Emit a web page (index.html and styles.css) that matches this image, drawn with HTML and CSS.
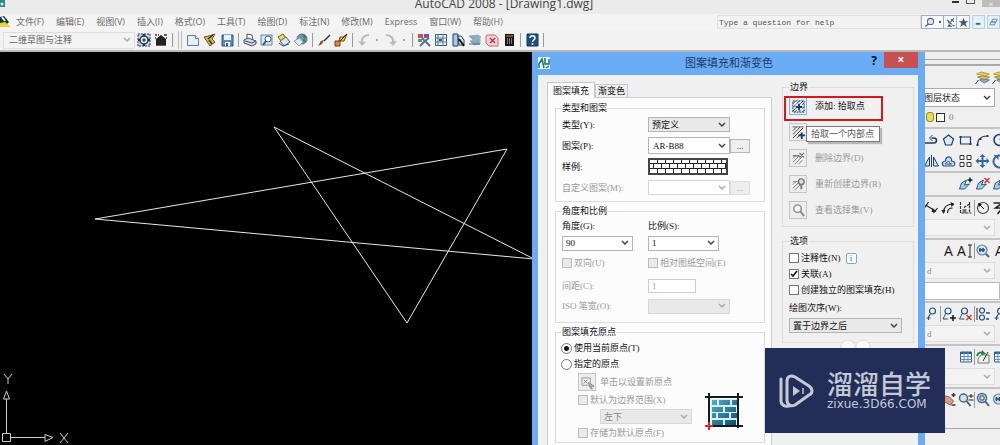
FILE: index.html
```html
<!DOCTYPE html>
<html lang="zh-CN">
<head>
<meta charset="utf-8">
<title>AutoCAD 2008 - [Drawing1.dwg]</title>
<link rel="stylesheet" href="styles.css">
</head>
<body>
<svg class="symbols" aria-hidden="true">
  <symbol id="gear" viewBox="0 0 16 16"><path d="M2 2h12v12H2z" fill="#c9d3dd" stroke="#29394a" stroke-dasharray="2 1"/><circle cx="8" cy="8" r="4" fill="#dfe8f2" stroke="#1f3650" stroke-width="1.5"/><circle cx="8" cy="8" r="1.5" fill="#1f3650"/><path d="M8 2v2M8 12v2M2 8h2M12 8h2" stroke="#1f3650" stroke-width="2"/></symbol>
  <symbol id="home" viewBox="0 0 16 16"><path d="M3 7l5-4 5 4v6H3z" fill="#222"/><path d="M2 3h2M5 3h1M11 3h3M2 6h1M13 6h1M3 13h10" stroke="#333" stroke-width="1.5"/><path d="M3 7h10v6H3z" fill="#222"/></symbol>
  <symbol id="new" viewBox="0 0 16 16"><path d="M2.500 3.500h8l3 3v7h-11z" fill="#e4eff8" stroke="#5c7f9f"/><path d="M10.500 3.500v3h3" fill="#fff" stroke="#5c7f9f"/></symbol>
  <symbol id="open" viewBox="0 0 16 16"><path d="M2 5l5-1 6-2-3 5 3 3-5 4z" fill="#d8b647" stroke="#6b5a1c"/><path d="M6 7l5-4M7 8l3 4" stroke="#333" stroke-width="1.500"/></symbol>
  <symbol id="save" viewBox="0 0 16 16"><path d="M3 3h11v11H3z" fill="#5b8ab8" stroke="#31597f"/><path d="M5 3h7v5H5z" fill="#e8f1fa"/><path d="M6 10h5v4H6z" fill="#fff"/><path d="M7 11h2v3H7z" fill="#31597f"/></symbol>
  <symbol id="print" viewBox="0 0 16 16"><path d="M5 2l5 1 1 6-6-1z" fill="#fff" stroke="#456"/><path d="M2 8l4-2 8 3v3l-4 2-8-3z" fill="#d6dce5" stroke="#43506b"/><path d="M3 9l7 2 4-2" fill="none" stroke="#43506b"/></symbol>
  <symbol id="preview" viewBox="0 0 16 16"><path d="M2 3h11v10H2z" fill="#d9eaf7" stroke="#6086a8"/><circle cx="9" cy="7" r="3" fill="#fff" stroke="#35587b"/><path d="M7 9l-3 4" stroke="#35587b" stroke-width="2"/></symbol>
  <symbol id="publish" viewBox="0 0 16 16"><path d="M2 5l5-3 3 4-5 3z" fill="#efd55b" stroke="#766015"/><path d="M4 9l6-4 4 5-6 4z" fill="#dce6ee" stroke="#476178"/><path d="M3 11l4 3 6-2" fill="none" stroke="#374f66"/></symbol>
  <symbol id="globe" viewBox="0 0 16 16"><circle cx="9" cy="7" r="5" fill="#6f95b5" stroke="#537087"/><path d="M9 2c5 1 5 4 2 5s1 3 2 3" fill="#3f7f55"/><path d="M1 9l6-3 3 4-4 4z" fill="#dfe9ef" stroke="#8b9cab"/></symbol>
  <symbol id="brush" viewBox="0 0 16 16"><path d="M14 3L8 9" stroke="#333" stroke-width="1.500"/><path d="M8 8l-2 4-4 2 3-5z" fill="#7b4a3a"/></symbol>
  <symbol id="match" viewBox="0 0 16 16"><path d="M14 2l-4 3-3 0-1 4 5 0z" fill="#eac34c" stroke="#684910"/><path d="M2 9h5v5H2z" fill="#d98a3a" stroke="#7d3e17"/><path d="M14 2L7 9" stroke="#503015"/></symbol>
  <symbol id="undo" viewBox="0 0 16 16"><path d="M13 3C8 3 5 6 6 12" fill="none" stroke="#b9bdc1" stroke-width="2"/><path d="M2 9l4 5 4-4z" fill="#b9bdc1"/></symbol>
  <symbol id="redo" viewBox="0 0 16 16"><path d="M3 3c5 0 8 3 7 9" fill="none" stroke="#b9bdc1" stroke-width="2"/><path d="M14 9l-4 5-4-4z" fill="#b9bdc1"/></symbol>
  <symbol id="props" viewBox="0 0 16 16"><path d="M2 2h5v4H2z" fill="#d4485c"/><path d="M8 2h5v4H8z" fill="#7252b5"/><path d="M2 7h4v3H2z" fill="#46a35e"/><path d="M6 6l3 3 4-3M9 9l-5 5M9 9l5 5" fill="none" stroke="#5a7389" stroke-width="2"/></symbol>
  <symbol id="center" viewBox="0 0 16 16"><path d="M2.500 2.500h11v11h-11z" fill="#eef4fa" stroke="#31587c"/><path d="M5 2v12M2 6h12M2 10h12M10 2v12" stroke="#4d7799"/><path d="M6 7h3v2H6z" fill="#31587c"/></symbol>
  <symbol id="palettes" viewBox="0 0 16 16"><path d="M3 2h5v12H3z" fill="#aacbe6" stroke="#1f405d"/><path d="M8 4h3l3 4v5H9z" fill="#e6eff6" stroke="#1f405d"/><path d="M9 7l5 7" stroke="#111" stroke-width="2"/></symbol>
  <symbol id="sheets" viewBox="0 0 16 16"><path d="M2 4l9-1 3 2-8 3zM3 9l10-3v6l-6 1z" fill="#8ba9b9" stroke="#9ab1bd"/><path d="M2 12h11" stroke="#4a6d80"/></symbol>
  <symbol id="markup" viewBox="0 0 16 16"><path d="M3 3h8l3 3v8H5L2 11V4z" fill="#f1d3d6" stroke="#c66a74"/><path d="M6 6l5 5M11 6l-5 5" stroke="#bd3b46" stroke-width="1.500"/></symbol>
  <symbol id="calc" viewBox="0 0 16 16"><path d="M4 2h9v12H4z" fill="#171717"/><path d="M5 3h7v2H5z" fill="#a53b2b"/><path d="M6 7h6M6 9h6M6 11h6" stroke="#ddd" stroke-dasharray="1 1"/></symbol>
  <symbol id="help" viewBox="0 0 16 16"><path d="M3 2h11v12H3z" fill="#1d4f80" stroke="#123b63"/><path d="M6 6c0-3 5-3 5 0 0 2-2.500 2-2.500 4M8.500 11v2" fill="none" stroke="#fff" stroke-width="1.500"/></symbol>
  <symbol id="lens" viewBox="0 0 16 16"><path d="M7 9l-5 5" stroke="#555c68" stroke-width="2"/><circle cx="9.500" cy="6.500" r="4.500" fill="#dfe5f3" stroke="#5a6480" stroke-width="1.500"/></symbol>
  <symbol id="dish" viewBox="0 0 16 16"><path d="M3 3c0 5 3 8 8 8zM6 10l-3 4h8z" fill="#4a607c"/><path d="M9 3l4 4M8 7l5-5M11 12l3 1" stroke="#4a607c" stroke-width="1.500"/></symbol>
  <symbol id="star" viewBox="0 0 16 16"><path d="M8 1l2 5h5l-4 3 2 6-5-4-5 4 2-6-4-3h5z" fill="#46566c"/></symbol>
  <symbol id="layers" viewBox="0 0 16 16"><path d="M2 5l5-2 8 2-5 2z" fill="#e3cb55" stroke="#b9a23a"/><path d="M3 8l5-1 7 1-5 3z" fill="#d2c27a" stroke="#9c8d4a"/><path d="M5 11l4-1 6 1-5 3z" fill="#94aabc" stroke="#6b8092"/><path d="M1 15l3-4" stroke="#333"/></symbol>
  <symbol id="pline" viewBox="0 0 16 16"><path d="M1 11h9c4 0 4-5 0-5H8" fill="none" stroke="#1f3e5c" stroke-width="1.500"/><path d="M9 3L6 6l3 3" fill="none" stroke="#1f3e5c"/></symbol>
  <symbol id="polygon" viewBox="0 0 16 16"><path d="M8 3l5 4-2 6H5L3 7z" fill="#dceaf4" stroke="#1f3e5c" stroke-width="1.200"/></symbol>
  <symbol id="rect" viewBox="0 0 16 16"><path d="M3 5h10v7H3z" fill="#e7f0f7" stroke="#1f3e5c" stroke-width="1.200"/><path d="M2 4h2v2H2zM12 11h2v2h-2z" fill="#1f3e5c"/></symbol>
  <symbol id="arc" viewBox="0 0 16 16"><path d="M3 13c0-6 4-9 10-9" fill="none" stroke="#1f3e5c" stroke-width="1.200"/><path d="M2 12h2v2H2zM12 3h2v2h-2zM5 6h2v2H5z" fill="#1f3e5c"/></symbol>
  <symbol id="circle" viewBox="0 0 16 16"><circle cx="8" cy="8" r="5.500" fill="#e7f0f7" stroke="#1f3e5c" stroke-width="1.500"/><path d="M8 8l3-3" stroke="#1f3e5c"/></symbol>
  <symbol id="mirror" viewBox="0 0 16 16"><path d="M6 4v9H1zM10 4v9h5z" fill="#cfe0ec" stroke="#1f3e5c"/><path d="M8 2v12" stroke="#1f3e5c"/></symbol>
  <symbol id="offset" viewBox="0 0 16 16"><path d="M3 13c-3-3 0-5 2-5 0-6 7-5 6 0 4 0 4 4 2 5z" fill="#c5dced" stroke="#2a5478" stroke-width="1.200"/><path d="M5 11c0-2 2-1 3-3 1 1 0 3 3 3z" fill="#fff" stroke="#2a5478"/></symbol>
  <symbol id="array" viewBox="0 0 16 16"><path d="M2.500 2.500h4v4h-4zM9.500 2.500h4v4h-4zM2.500 9.500h4v4h-4zM9.500 9.500h4v4h-4z" fill="#fff" stroke="#333"/></symbol>
  <symbol id="move" viewBox="0 0 16 16"><path d="M8 3v10M3 8h10" stroke="#326a98" stroke-width="2"/><path d="M8 1l3 3H5zM8 15l3-3H5zM1 8l3-3v6zM15 8l-3-3v6z" fill="#326a98"/></symbol>
  <symbol id="rotate" viewBox="0 0 16 16"><path d="M12 4a6 6 0 1 0 2 5" fill="none" stroke="#326a98" stroke-width="2"/><path d="M2 2h5v5z" fill="#326a98"/></symbol>
  <symbol id="edit-add" viewBox="0 0 16 16"><path d="M2 13l2-6 5-3-2 5 5-1-5 5z" fill="#a9cbe2" stroke="#285b84"/><path d="M10 4h5M12.500 1.500v5" stroke="#123" stroke-width="1.500"/></symbol>
  <symbol id="edit-del" viewBox="0 0 16 16"><path d="M2 13l2-6 5-3-2 5 5-1-5 5z" fill="#a9cbe2" stroke="#285b84"/><path d="M10 2l5 5M15 2l-5 5" stroke="#c83a3a" stroke-width="1.500"/></symbol>
  <symbol id="dim-align" viewBox="0 0 16 16"><path d="M2 5l10 6M10 13l4-5M1 8l4-6" stroke="#222" stroke-width="1.200"/><path d="M9 8l4 4-5 0z" fill="#222"/></symbol>
  <symbol id="dim-arc" viewBox="0 0 16 16"><path d="M3 13c0-6 4-9 10-9M7 13c0-3 2-5 5-5" fill="none" stroke="#222" stroke-width="1.200"/><path d="M1 10h4l-2 4zM10 2l4 2-3 3z" fill="#222"/></symbol>
  <symbol id="dim-ord" viewBox="0 0 16 16"><path d="M3 2v11h11M7 12V7l5-3v8M12 2v3" fill="none" stroke="#333" stroke-width="1.200" stroke-dasharray="3 1"/><path d="M5 9h4v4H5z" fill="#777"/></symbol>
  <symbol id="dim-rad" viewBox="0 0 16 16"><circle cx="8" cy="8" r="5.500" fill="none" stroke="#444" stroke-width="1.200"/><path d="M9 9L4 4" stroke="#111"/><path d="M3 3l4 1-3 3z" fill="#111"/></symbol>
  <symbol id="dim-jog" viewBox="0 0 16 16"><path d="M2 3h9L4 8h7l-5 6M11 8l3 5" fill="none" stroke="#222" stroke-width="1.500"/></symbol>
  <symbol id="find" viewBox="0 0 16 16"><circle cx="7" cy="7" r="5" fill="#cfe0ee" stroke="#6b849c" stroke-width="1.200"/><path d="M11 11l3 3" stroke="#47617b" stroke-width="2"/><path d="M4 7h6M5 5v4M8 5v4" stroke="#224d75" stroke-width="1.500"/></symbol>
  <symbol id="cursor-text" viewBox="0 0 8 16"><path d="M2 2h4M2 14h4M4 2v12" fill="none" stroke="#222"/></symbol>
  <symbol id="node" viewBox="0 0 16 16"><circle cx="9" cy="5" r="3" fill="#e9f2fa" stroke="#27507a" stroke-width="1.200"/><path d="M7 8l-2 3v3M3 12h4" fill="none" stroke="#27507a" stroke-width="1.200"/></symbol>
  <symbol id="node-add" viewBox="0 0 16 16"><circle cx="7" cy="5" r="3" fill="#e9f2fa" stroke="#27507a" stroke-width="1.200"/><path d="M5 7l-3 6h5" fill="none" stroke="#27507a"/><path d="M9 12h6M12 9v6" stroke="#111" stroke-width="1.500"/></symbol>
  <symbol id="node-del" viewBox="0 0 16 16"><circle cx="7" cy="5" r="3" fill="#e9f2fa" stroke="#27507a" stroke-width="1.200"/><path d="M5 7l-3 6h5" fill="none" stroke="#27507a"/><path d="M9 9l5 5M14 9l-5 5" stroke="#c83a2e" stroke-width="1.500"/></symbol>
  <symbol id="node-align" viewBox="0 0 16 16"><path d="M2 2v12" stroke="#222"/><circle cx="7" cy="4.500" r="2.500" fill="#e9f2fa" stroke="#27507a" stroke-width="1.200"/><circle cx="7" cy="11.500" r="2.500" fill="#e9f2fa" stroke="#27507a" stroke-width="1.200"/><path d="M11 7h4M11 13h3" stroke="#27507a" stroke-width="1.500"/></symbol>
  <symbol id="table" viewBox="0 0 16 16"><path d="M3 3h11v10H3z" fill="#f4f9ff" stroke="#2c5f9b"/><path d="M3 4h11" stroke="#2c5f9b" stroke-width="2"/><path d="M6.500 3v10M10.500 3v10M3 7.500h11M3 10.500h11" stroke="#5f8ec2"/></symbol>
  <symbol id="refresh" viewBox="0 0 16 16"><path d="M6 6h8v8H3v-4z" fill="#edf1ec" stroke="#777"/><path d="M2 7c1-4 4-4 6-3" fill="none" stroke="#1d8840" stroke-width="2"/><path d="M7 1l4 4-5 1z" fill="#1d8840"/><path d="M8 12l5-9" stroke="#333"/></symbol>
  <symbol id="pan" viewBox="0 0 16 16"><path d="M1 3l8 2 4 4-3 4-6-3z" fill="#d99a88" stroke="#9b5b4d"/><path d="M11 3h4M13 1v4M11 13h4" stroke="#234" stroke-width="1.500"/></symbol>
  <symbol id="zoom-rt" viewBox="0 0 16 16"><circle cx="6" cy="6" r="4" fill="#d2e4f2" stroke="#49647e" stroke-width="1.500"/><path d="M9 9l4 5" stroke="#49647e" stroke-width="2"/><path d="M11 4h5M13.500 2v4M11 8h5" stroke="#222"/></symbol>
  <symbol id="zoom-win" viewBox="0 0 16 16"><circle cx="7" cy="6" r="4.500" fill="#d2e4f2" stroke="#49647e" stroke-width="1.500"/><path d="M10 9l4 5" stroke="#49647e" stroke-width="2"/><path d="M5 4h4v4H5z" fill="none" stroke="#26506f"/></symbol>
  <symbol id="hatch-add" viewBox="0 0 16 16"><path d="M2 5l3-3M2 9l7-7M2 13L13 2M4 14L14 4M8 14l6-6M12 14l2-2" stroke="#333"/><path d="M2 2h12v12H2z" fill="none" stroke="#333" stroke-dasharray="2 1"/><path d="M5 5h7v7H5z" fill="#dcebf6"/><path d="M5 8.500h7M8.500 5v7" stroke="#173f66" stroke-width="2"/></symbol>
  <symbol id="hatch-pick" viewBox="0 0 16 16"><path d="M2 6l4-4M2 10l8-8M2 14L13 3M6 14l5-5" stroke="#333"/><path d="M2 2h11" stroke="#333" stroke-dasharray="2 1"/><path d="M8 11h7M11.500 8v7" stroke="#173f66" stroke-width="2"/></symbol>
  <symbol id="hatch-del" viewBox="0 0 16 16"><path d="M2 8l3-3M2 12l7-7M4 14l8-8M8 14l4-4" stroke="#777"/><path d="M2 5h7M9 2l5 5M14 2L9 7" stroke="#777" stroke-width="1.500"/></symbol>
  <symbol id="hatch-new" viewBox="0 0 16 16"><path d="M2 8l3-3M2 12l7-7M4 14l8-8" stroke="#777"/><path d="M2 5h6" stroke="#777"/><circle cx="11" cy="5" r="3" fill="#ddd" stroke="#777" stroke-width="1.500"/><path d="M11 8v5" stroke="#777" stroke-width="2"/></symbol>
  <symbol id="view" viewBox="0 0 16 16"><circle cx="7" cy="6" r="4" fill="#f5f5f5" stroke="#888" stroke-width="1.500"/><path d="M10 9l4 5" stroke="#888" stroke-width="2"/></symbol>
  <symbol id="origin" viewBox="0 0 16 16"><path d="M2 3h9v8H2z" fill="none" stroke="#999"/><path d="M4 5l4 4M8 5l-4 4M9 8l6 4-3 0 1 3-2-1z" fill="#bbb" stroke="#888"/></symbol>
</svg>

<div class="app">
  <header class="titlebar">
    <svg class="app-logo" viewBox="0 0 8 8" aria-hidden="true"><path d="M0 0h5v7H0z" fill="#2b8a86"/><circle cx="2" cy="4" r="1.500" fill="#d5efec"/></svg>
    <h1>AutoCAD 2008 - [Drawing1.dwg]</h1>
    <div class="win-buttons">
      <button aria-label="最小化" class="win-min"></button>
      <button aria-label="最大化" class="win-max"></button>
      <button aria-label="关闭" class="win-close">×</button>
    </div>
  </header>

  <nav class="menubar">
    <svg class="doc-logo" viewBox="0 0 12 14" aria-hidden="true"><path d="M0 2l4-1 5 6-4 4-5-3z" fill="#173443"/><path d="M0 8l5-1 6 5H0z" fill="#eed12f"/><path d="M2 2l3 4" stroke="#e8f2f4" stroke-width="2"/></svg>
    <button>文件(F)</button><button>编辑(E)</button><button>视图(V)</button><button>插入(I)</button><button>格式(O)</button><button>工具(T)</button><button>绘图(D)</button><button>标注(N)</button><button>修改(M)</button><button>Express</button><button>窗口(W)</button><button>帮助(H)</button>
    <div class="helpbar">
      <input type="text" value="Type a question for help" aria-label="帮助搜索">
      <button class="hb hb-wide" aria-label="搜索"><svg><use href="#lens"/></svg><i class="dot"></i></button>
      <button class="hb" aria-label="通讯中心"><svg><use href="#dish"/></svg></button>
      <button class="hb" aria-label="收藏夹"><svg><use href="#star"/></svg></button>
      <button class="mdi" aria-label="最小化文档"><svg viewBox="0 0 12 12"><path d="M3 8h5" stroke="#4a6278" stroke-width="2"/></svg></button>
      <button class="mdi" aria-label="还原文档"><svg viewBox="0 0 12 12"><path d="M5 3h5l-1 3H4zM3 6h5L7 9H2z" fill="none" stroke="#6b8194"/></svg></button>
    </div>
  </nav>

  <div class="toolbar">
    <select class="workspace-select faint" aria-label="工作空间"><option>二维草图与注释</option></select>
    <button class="tool" aria-label="工作空间设置"><svg><use href="#gear"/></svg></button>
    <button class="tool" aria-label="我的工作空间"><svg><use href="#home"/></svg></button>
    <i class="sep"></i><i class="grip"></i>
    <button class="tool" aria-label="新建"><svg><use href="#new"/></svg></button>
    <button class="tool" aria-label="打开"><svg><use href="#open"/></svg></button>
    <button class="tool" aria-label="保存"><svg><use href="#save"/></svg></button>
    <i class="sep"></i>
    <button class="tool" aria-label="打印"><svg><use href="#print"/></svg></button>
    <button class="tool" aria-label="打印预览"><svg><use href="#preview"/></svg></button>
    <button class="tool" aria-label="发布"><svg><use href="#publish"/></svg></button>
    <button class="tool" aria-label="三维DWF"><svg><use href="#globe"/></svg></button>
    <i class="sep"></i>
    <button class="tool" aria-label="特性匹配"><svg><use href="#brush"/></svg></button>
    <button class="tool" aria-label="块编辑器"><svg><use href="#match"/></svg></button>
    <i class="sep"></i>
    <button class="tool" aria-label="放弃"><svg><use href="#undo"/></svg></button><i class="caret"></i>
    <button class="tool" aria-label="重做"><svg><use href="#redo"/></svg></button><i class="caret"></i>
    <i class="sep"></i>
    <button class="tool" aria-label="特性"><svg><use href="#props"/></svg></button>
    <button class="tool" aria-label="设计中心"><svg><use href="#center"/></svg></button>
    <button class="tool" aria-label="工具选项板"><svg><use href="#palettes"/></svg></button>
    <button class="tool" aria-label="图纸集"><svg><use href="#sheets"/></svg></button>
    <button class="tool" aria-label="标记集"><svg><use href="#markup"/></svg></button>
    <button class="tool" aria-label="计算器"><svg><use href="#calc"/></svg></button>
    <i class="sep"></i>
    <button class="tool" aria-label="帮助"><svg><use href="#help"/></svg></button>
    <i class="sep"></i>
  </div>

  <main class="workspace">
    <div class="canvas">
      <svg class="drawing" width="534" height="393" viewBox="0 52 534 393" aria-label="图形">
        <path d="M95 219L507 149L407 323L274 127L534 259Z" fill="none" stroke="#e8e8e8"/>
        <g fill="none" stroke="#cfcfcf"><path d="M2.500 433.500h8v8h-8zM6.500 433v-34M11 437.500h34M6.500 391l-3 8h6zM53 437.500l-8-3v7z"/><path d="M4 374l4 5 4-5M8 379v5M60 433l8 10M68 433l-8 10"/></g>
      </svg>
    </div>
    <aside class="palette">
      <div class="pal-grip"></div>
      <div class="pal-row first"><i class="slot"></i><i class="slot"></i><i class="slot"></i><svg><use href="#layers"/></svg><svg><use href="#layers"/></svg></div>
      <div class="pal-combo"><select class="layer-state" aria-label="图层状态"><option>图层状态</option></select></div>
      <div class="pal-row layer-row"><i class="bulb"></i><i class="swatch"></i><span>0</span></div>
      <div class="pal-row ruled"><svg><use href="#pline"/></svg><svg><use href="#polygon"/></svg><svg><use href="#rect"/></svg><svg><use href="#arc"/></svg><svg><use href="#circle"/></svg></div>
      <div class="pal-row"><svg><use href="#mirror"/></svg><svg><use href="#offset"/></svg><svg><use href="#array"/></svg><svg><use href="#move"/></svg><svg><use href="#rotate"/></svg></div>
      <div class="pal-row ruled"><i class="slot"></i><i class="slot"></i><svg><use href="#edit-add"/></svg><svg><use href="#edit-del"/></svg><svg><use href="#edit-add"/></svg></div>
      <div class="pal-row ruled"><svg><use href="#dim-align"/></svg><svg><use href="#dim-arc"/></svg><svg><use href="#dim-ord"/></svg><svg class="split"><use href="#dim-rad"/></svg><svg><use href="#dim-jog"/></svg></div>
      <div class="pal-combo"><select class="faint" aria-label="标注样式"><option></option></select></div>
      <div class="pal-row ruled"><i class="slot"></i><b class="slot">A</b><span class="slot text-cursor"><b>A</b><svg class="ibeam"><use href="#cursor-text"/></svg></span><svg class="split"><use href="#find"/></svg><b class="slot">A</b></div>
      <div class="pal-combo"><select class="std faint" aria-label="文字样式"><option>d</option></select></div>
      <div class="pal-blank"></div>
      <div class="pal-row ruled"><svg><use href="#node"/></svg><svg class="split"><use href="#node-add"/></svg><svg><use href="#node-del"/></svg><svg class="split"><use href="#node-align"/></svg><svg><use href="#node"/></svg></div>
      <div class="pal-combo"><select class="std faint" aria-label="引线样式"><option>d</option></select></div>
      <div class="pal-row ruled"><i class="slot"></i><i class="slot"></i><svg><use href="#table"/></svg><svg class="split"><use href="#refresh"/></svg><svg><use href="#table"/></svg></div>
      <div class="pal-combo"><select class="faint" aria-label="表格样式"><option></option></select></div>
      <div class="pal-row ruled"><i class="slot"></i><svg><use href="#pan"/></svg><svg><use href="#zoom-rt"/></svg><svg class="split"><use href="#zoom-win"/></svg><svg><use href="#find"/></svg></div>
      <div class="pal-end"></div>
    </aside>
  </main>

  <section class="dialog" role="dialog" aria-labelledby="dlg-title">
    <div class="dlg-title">
      <svg class="dlg-logo" viewBox="0 0 12 12" aria-hidden="true"><path d="M0 0h12v12H0z" fill="#e4f4ef"/><path d="M1 11V7l3-5 2 9M7 1v6h4V2M8 11l3-2" fill="none" stroke="#1c7367" stroke-width="1.500"/></svg>
      <h2 id="dlg-title">图案填充和渐变色</h2>
      <button class="dlg-help" aria-label="帮助">?</button>
      <button class="dlg-close" aria-label="关闭">×</button>
    </div>
    <div class="dlg-body">
      <div class="left-col">
        <div class="tabs" role="tablist"><button role="tab" class="tab active">图案填充</button><button role="tab" class="tab">渐变色</button></div>
        <div class="sheet">
          <fieldset class="group">
            <legend>类型和图案</legend>
            <div class="field"><label for="type">类型(Y):</label><select id="type"><option>预定义</option></select></div>
            <div class="field"><label for="pattern">图案(P):</label><select id="pattern" class="white"><option>AR-B88</option></select><button class="more">...</button></div>
            <div class="field"><span>样例:</span>
              <svg class="sample" width="80" height="17" viewBox="0 0 80 17" aria-label="AR-B88">
                <defs><pattern id="brick" width="8" height="10" patternUnits="userSpaceOnUse"><path d="M0 .5h8M0 5.500h8M1.500 0v5M5.500 5v5" stroke="#222"/></pattern></defs>
                <rect x="1" y="1" width="78" height="15" fill="#fff"/><rect x="1" y="1" width="78" height="15" fill="url(#brick)" stroke="#444" stroke-width="2"/>
              </svg></div>
            <div class="field off"><label for="custom">自定义图案(M):</label><select id="custom" class="white" disabled><option></option></select><button class="more" disabled>...</button></div>
          </fieldset>

          <fieldset class="group">
            <legend>角度和比例</legend>
            <div class="pair labels"><label for="angle">角度(G):</label><label for="scale">比例(S):</label></div>
            <div class="pair combos"><select id="angle" class="white narrow"><option>90</option></select><select id="scale" class="white narrow"><option>1</option></select></div>
            <div class="pair checks off"><label><input type="checkbox" disabled>双向(U)</label><label><input type="checkbox" disabled>相对图纸空间(E)</label></div>
            <div class="pair spacing off"><label for="gap">间距(C):</label><input id="gap" type="text" value="1" disabled></div>
            <div class="pair iso off"><label for="iso">ISO 笔宽(O):</label><select id="iso" disabled><option></option></select></div>
          </fieldset>

          <fieldset class="group origin">
            <legend>图案填充原点</legend>
            <label class="line"><input type="radio" name="origin" checked>使用当前原点(T)</label>
            <label class="line"><input type="radio" name="origin">指定的原点</label>
            <div class="origin-body">
              <div class="origin-options off">
                <div class="pick"><button id="setorigin" class="icon-btn" disabled aria-labelledby="so"><svg><use href="#origin"/></svg></button><span id="so">单击以设置新原点</span></div>
                <label class="line"><input type="checkbox" disabled>默认为边界范围(X)</label>
                <select class="corner" disabled aria-label="边界范围"><option>左下</option></select>
                <label class="line"><input type="checkbox" disabled>存储为默认原点(F)</label>
              </div>
              <svg class="origin-preview" width="40" height="40" viewBox="0 0 40 40" aria-hidden="true">
                <defs><linearGradient id="tile" x1="0" y1="0" x2="1" y2="1"><stop offset="0" stop-color="#4fb0c6"/><stop offset="1" stop-color="#0d4c6b"/></linearGradient></defs>
                <path d="M7 7h26v26H7z" fill="#d8eff2"/>
                <g fill="url(#tile)"><path d="M8 8h5v5H8zM15 8h11v5H15zM28 8h5v5h-5zM8 15h11v5H8zM21 15h11v5H21zM8 21h4v5H8zM14 21h11v5H14zM27 21h6v5h-6zM8 28h11v5H8zM21 28h11v5H21z"/></g>
                <path d="M5 1v35M34 1v35M1 5h38M1 34h38" stroke="#151a1d" stroke-width="2"/>
                <path d="M1 34h8M5 30v8" stroke="#d92626" stroke-width="2"/>
              </svg>
            </div>
          </fieldset>
        </div>
      </div>

      <div class="right-col">
        <fieldset class="group bounds">
          <legend>边界</legend>
          <div class="brow"><button class="icon-btn hot" aria-labelledby="b1"><svg><use href="#hatch-add"/></svg></button><span id="b1">添加: 拾取点</span></div>
          <div class="brow"><button class="icon-btn" aria-labelledby="b2"><svg><use href="#hatch-pick"/></svg></button><span id="b2">添加: 选择对象</span></div>
          <div class="brow off"><button class="icon-btn" disabled aria-labelledby="b3"><svg><use href="#hatch-del"/></svg></button><span id="b3">删除边界(D)</span></div>
          <div class="brow off"><button class="icon-btn" disabled aria-labelledby="b4"><svg><use href="#hatch-new"/></svg></button><span id="b4">重新创建边界(R)</span></div>
          <div class="brow off"><button class="icon-btn" disabled aria-labelledby="b5"><svg><use href="#view"/></svg></button><span id="b5">查看选择集(V)</span></div>
          <div class="highlight"></div>
          <div class="tooltip" role="tooltip">拾取一个内部点</div>
        </fieldset>
        <fieldset class="group options">
          <legend>选项</legend>
          <div class="line"><label class="line"><input type="checkbox">注释性(N)</label><button class="info" aria-label="信息">i</button></div>
          <label class="line"><input type="checkbox" checked>关联(A)</label>
          <label class="line"><input type="checkbox">创建独立的图案填充(H)</label>
          <label class="order-label" for="order">绘图次序(W):</label>
          <select id="order"><option>置于边界之后</option></select>
        </fieldset>
      </div>
    </div>
  </section>

  <div class="watermark">
    <svg class="ears" viewBox="0 0 32 16" aria-hidden="true"><g fill="#fafafa" stroke="#ddd"><circle cx="8" cy="9" r="7"/><circle cx="23" cy="9" r="7"/></g></svg>
    <svg class="wm-logo" viewBox="0 0 36 36" aria-hidden="true"><g fill="none" stroke="#c3c9d6" stroke-linejoin="round" stroke-linecap="round"><path d="M8 8c0-5 4-6 8-4l14 9c4 3 4 7 0 9L16 32c-4 2-8 0-8-5z" stroke-width="3"/><path d="M2 6v22c0 4 4 6 8 5" stroke-width="3"/></g><path d="M14 13l7 5-7 5z" fill="#c3c9d6"/><path d="M24 15v6" stroke="#c3c9d6" stroke-width="1.500"/></svg>
    <div class="wm-text"><strong>溜溜自学</strong><span>zixue.3D66.COM</span></div>
  </div>
</div>
</body>
</html>
```

FILE: styles.css
```css
* { box-sizing: border-box; }

body {
  margin: 0;
  overflow: hidden;
  background: #efefef;
  color: #111;
  font: 9px/12px "Liberation Serif", "Noto Sans CJK SC", sans-serif;
}

button, input, select {
  margin: 0;
  padding: 0;
  border: 0;
  border-radius: 0;
  background: none;
  color: inherit;
  font: inherit;
  opacity: 1;
}

h1, h2 { margin: 0; font-weight: normal; }
.symbols { position: absolute; width: 0; height: 0; }
label, span, button, option { white-space: nowrap; }

select {
  appearance: none;
  height: 15px;
  padding: 0 14px 0 3px;
  border: 1px solid #b4b4b4;
  background: #e9e9e9 url("data:image/svg+xml,%3Csvg xmlns='http://www.w3.org/2000/svg' width='8' height='6'%3E%3Cpath d='M1 1l3 3 3-3' fill='none' stroke='%23444' stroke-width='1.5'/%3E%3C/svg%3E") no-repeat right 3px center;
}
select.white { background-color: #fff; }
select:disabled, select.faint {
  background-image: url("data:image/svg+xml,%3Csvg xmlns='http://www.w3.org/2000/svg' width='8' height='6'%3E%3Cpath d='M1 1l3 3 3-3' fill='none' stroke='%23aaa' stroke-width='1.5'/%3E%3C/svg%3E");
}
select:disabled { border-color: #d6d6d6; color: #888; }

.app {
  position: relative;
  display: flex;
  flex-direction: column;
  height: 100vh;
  overflow: hidden;
}

/* title bar */
.titlebar {
  display: flex;
  align-items: flex-start;
  height: 14px;
  background: #ebebeb;
}
.app-logo { width: 8px; height: 8px; }
.titlebar h1 {
  flex: 1;
  padding-left: 48px;
  text-align: center;
  color: #444;
  font: 12px/8px "Open Sans", sans-serif;
}
.win-buttons { display: flex; gap: 7px; align-items: flex-start; }
.win-min { width: 7px; height: 3px; border-bottom: 2px solid #333; }
.win-max { width: 9px; height: 4px; border: 1px solid #555; border-top: 0; }
.win-close { width: 18px; height: 7px; background: #bcbcbc; color: #fff; line-height: 2px; }

/* menu bar */
.menubar {
  display: flex;
  align-items: center;
  gap: 12px;
  height: 16px;
  background: #f4f4f4;
  color: #6c6c6c;
  font-family: "Open Sans", "Noto Sans CJK SC", sans-serif;
}
.doc-logo { width: 12px; height: 14px; margin-right: -8px; }
.helpbar { display: flex; flex: 1; justify-content: flex-end; align-items: center; }
.helpbar input {
  width: 204px;
  height: 14px;
  padding-left: 1px;
  border: 1px solid #e0e0e0;
  background: #f2f2f2;
  color: #555;
  font: 8px "Liberation Mono", monospace;
}
.hb {
  display: flex;
  align-items: center;
  justify-content: center;
  width: 13px;
  height: 14px;
  border: 1px solid #9db0c6;
  border-left-width: 0;
  background: #f7f9fc;
}
.hb svg { width: 11px; height: 11px; }
.hb use { transform: scale(1); }
.hb-wide { width: 23px; gap: 4px; border-left-width: 1px; }
.dot { width: 2px; height: 2px; background: #555; }
.mdi { width: 13px; height: 14px; margin-left: 2px; border: 1px solid #b4cfe6; background: #e2effa; }
.mdi svg { display: block; width: 11px; height: 12px; }

/* standard toolbar */
.toolbar {
  display: flex;
  align-items: center;
  height: 22px;
  padding-left: 3px;
  border-bottom: 2px solid #b9b9b9;
  background: #f2f2f2;
}
.workspace-select {
  width: 132px;
  height: 17px;
  padding-left: 5px;
  border-color: #ddd;
  background-color: #f3f3f3;
  color: #666;
}
.tool { display: flex; justify-content: center; width: 17px; }
.tool svg { width: 16px; height: 16px; }
.sep { width: 6px; height: 14px; border-left: 1px solid #999; margin-right: -3px; margin-left: 3px; }
.grip { width: 4px; height: 18px; margin: 0 2px 0 3px; border: solid #bbb; border-width: 0 1px; }
.caret { width: 10px; height: 2px; border: solid transparent; border-width: 0 4px; background: #aaa content-box; background-clip: padding-box; }

/* drawing area */
.workspace { display: flex; flex: 1; min-height: 0; }
.canvas { flex: 1; overflow: hidden; background: #000; }
.drawing { display: block; }

/* docked palettes */
.palette { width: 82px; overflow: hidden; background: #efefef; }
.pal-grip { height: 14px; padding-top: 7px; border-bottom: 1px solid #aaa; }
.pal-grip::before { content: ""; display: block; height: 4px; border: solid #aaa; border-width: 1px 0; }
.pal-row { display: flex; align-items: center; height: 20px; padding-left: 5px; }
.pal-row.first { height: 22px; }
.pal-row svg, .slot { flex: none; width: 17px; height: 16px; }
.pal-row.ruled { height: 24px; border-top: 2px solid #c4c4c4; }
.pal-row .split { border-left: 1px solid #999; }
.slot { font: 14px/16px "Open Sans", sans-serif; text-align: center; }
.slot b { font-weight: normal; }
.text-cursor { display: flex; }
.pal-row .ibeam { width: 8px; }
.pal-combo { height: 19px; }
.pal-combo select { width: 77px; height: 17px; border-color: #ddd; background-color: #f3f3f3; color: #888; }
.pal-combo .layer-state { height: 19px; padding-left: 5px; border-color: #aaa; background-color: #fff; color: #222; }
.pal-combo .std { padding-left: 8px; }
.layer-row { gap: 2px; padding-left: 8px; }
.bulb { width: 8px; height: 10px; border: 1px solid #8e8b25; border-radius: 3px; background: #e8df4c; }
.swatch { width: 9px; height: 9px; border: 1px solid #333; background: #fff; }
.layer-row span { padding-left: 2px; color: #777; }
.pal-blank { height: 18px; margin: 1px 0; border: 1px solid #bbb; background: #fff; }
.pal-end { height: 18px; border-bottom: 1px solid #aaa; }

/* hatch dialog */
.dialog {
  position: absolute;
  top: 52px;
  bottom: 0;
  left: 532px;
  display: flex;
  flex-direction: column;
  width: 393px;
  padding: 0 7px 0 6px;
  overflow: hidden;
  background: #6aabf5;
}
.dlg-title { display: flex; flex: none; align-items: flex-start; height: 23px; }
.dlg-logo { width: 12px; height: 12px; margin-top: 5px; }
.dlg-title h2 { flex: 1; padding-left: 44px; color: #1e3a63; font-size: 11px; line-height: 23px; text-align: center; }
.dlg-help { width: 20px; color: #112; font: bold 12px/18px "Open Sans", sans-serif; }
.dlg-close { width: 34px; height: 16px; background: #c8504f; color: #fff; font: bold 12px/14px "Open Sans", sans-serif; }
.dlg-body {
  display: flex;
  flex: 1;
  gap: 10px;
  min-height: 0;
  padding: 6px 4px 0 9px;
  background: #f0f0f0;
}
.left-col { display: flex; flex: 1; flex-direction: column; min-width: 0; padding-top: 1px; }
.tabs { display: flex; align-items: flex-end; height: 15px; }
.tab { height: 13px; padding: 0 2px; border: 1px solid #c8c8c8; border-bottom: 0; background: #f0f0f0; }
.tab.active { z-index: 1; height: 16px; margin-bottom: -1px; padding: 0 5px; background: #fcfcfc; }
.sheet { flex: 1; padding: 4px 6px 0 7px; border: 1px solid #ccc; background: #fcfcfc; }

.group { min-width: 0; margin: 0 0 3px; padding: 0 0 3px 5px; border: 1px solid #dcdcdc; }
.group legend { height: 12px; padding: 0 1px; line-height: 12px; }
.off { color: #999; }
.field { display: grid; grid-template-columns: 86px 82px 20px; align-items: center; height: 21px; padding-left: 1px; }
.field .white { height: 17px; padding-left: 4px; }
.field select:disabled { height: 15px; }
.more { height: 14px; border: 1px solid #b8b8b8; background: #eee; line-height: 8px; }
.off .more { border-color: #ddd; }

.pair { display: grid; grid-template-columns: 86px 82px; align-items: center; height: 18px; padding-left: 1px; }
.pair.combos { height: 16px; }
.pair.checks { height: 24px; }
.pair.spacing { height: 22px; }
.pair.iso { margin-bottom: 4px; }
.narrow { width: 71px; }
.pair input[type="text"] { width: 48px; height: 14px; padding-left: 3px; border: 1px solid #ccc; background: #fff; }
label > input { flex: none; }
.checks label, .line { display: flex; align-items: center; gap: 2px; }
.line { height: 16px; }

input[type="checkbox"], input[type="radio"] {
  appearance: none;
  width: 10px;
  height: 10px;
  border: 1px solid #777;
  background: #fff;
}
input[type="checkbox"]:disabled { border-color: #bbb; background: #eaeaea; }
input[type="checkbox"]:checked {
  background: #fff url("data:image/svg+xml,%3Csvg xmlns='http://www.w3.org/2000/svg' width='8' height='8'%3E%3Cpath d='M1 4l2 2 4-5' fill='none' stroke='%23111' stroke-width='1.6'/%3E%3C/svg%3E") center no-repeat;
}
input[type="radio"] { width: 11px; height: 11px; border-radius: 50%; }
input[type="radio"]:checked { background: radial-gradient(circle, #111 0 2px, #fff 3px); }

.origin { padding: 2px 0 1px 5px; }
.origin-body { display: flex; gap: 13px; align-items: center; padding-left: 17px; }
.origin-options { width: 113px; }
.pick { display: flex; gap: 4px; align-items: center; height: 20px; }
.corner { display: block; width: 92px; margin: 1px 0 1px 22px; }
.origin-preview { flex: none; margin-top: 10px; }

.icon-btn { display: flex; flex: none; align-items: center; justify-content: center; width: 18px; height: 18px; border: 1px solid #c4c4c4; background: #ededed; }
.icon-btn svg { width: 15px; height: 15px; }
.icon-btn.hot { border-color: #7fb2e0; background: #e2eef9; }

.right-col { width: 132px; }
.right-col .group { padding-left: 6px; }
.bounds { position: relative; }
.right-col .bounds { margin-bottom: 8px; }
.brow { display: flex; gap: 8px; align-items: center; height: 26px; }
.highlight { position: absolute; top: 3px; left: 1px; width: 99px; height: 25px; border: 2px solid #d4191c; }
.tooltip {
  position: absolute;
  top: 33px;
  left: 23px;
  padding: 1px 5px 1px 4px;
  border: 1px solid #777;
  background: #fff;
  box-shadow: 2px 2px 1px #8888;
  color: #555;
  white-space: nowrap;
}
.right-col .options { padding: 3px 0 9px 6px; }
.info { width: 11px; height: 11px; margin-left: 3px; border: 1px solid #79a9cf; border-radius: 2px; background: #fff; color: #2568a6; line-height: 9px; }
.order-label { display: block; line-height: 20px; }
#order { display: block; width: 113px; }

/* site badge */
.watermark {
  position: absolute;
  top: 348px;
  left: 765px;
  display: flex;
  gap: 12px;
  align-items: center;
  width: 180px;
  height: 85px;
  padding-left: 14px;
  background: #222e57;
  color: #c3c9d6;
}
.ears { position: absolute; top: -10px; left: 75px; width: 32px; height: 16px; clip-path: inset(0 0 6px 0); }
.wm-logo { width: 36px; height: 36px; }
.wm-text { display: flex; flex-direction: column; }
.wm-text strong { font: 500 26px/26px "Noto Sans CJK SC", sans-serif; }
.wm-text span { font: 12px/16px "DejaVu Sans", sans-serif; }
```
